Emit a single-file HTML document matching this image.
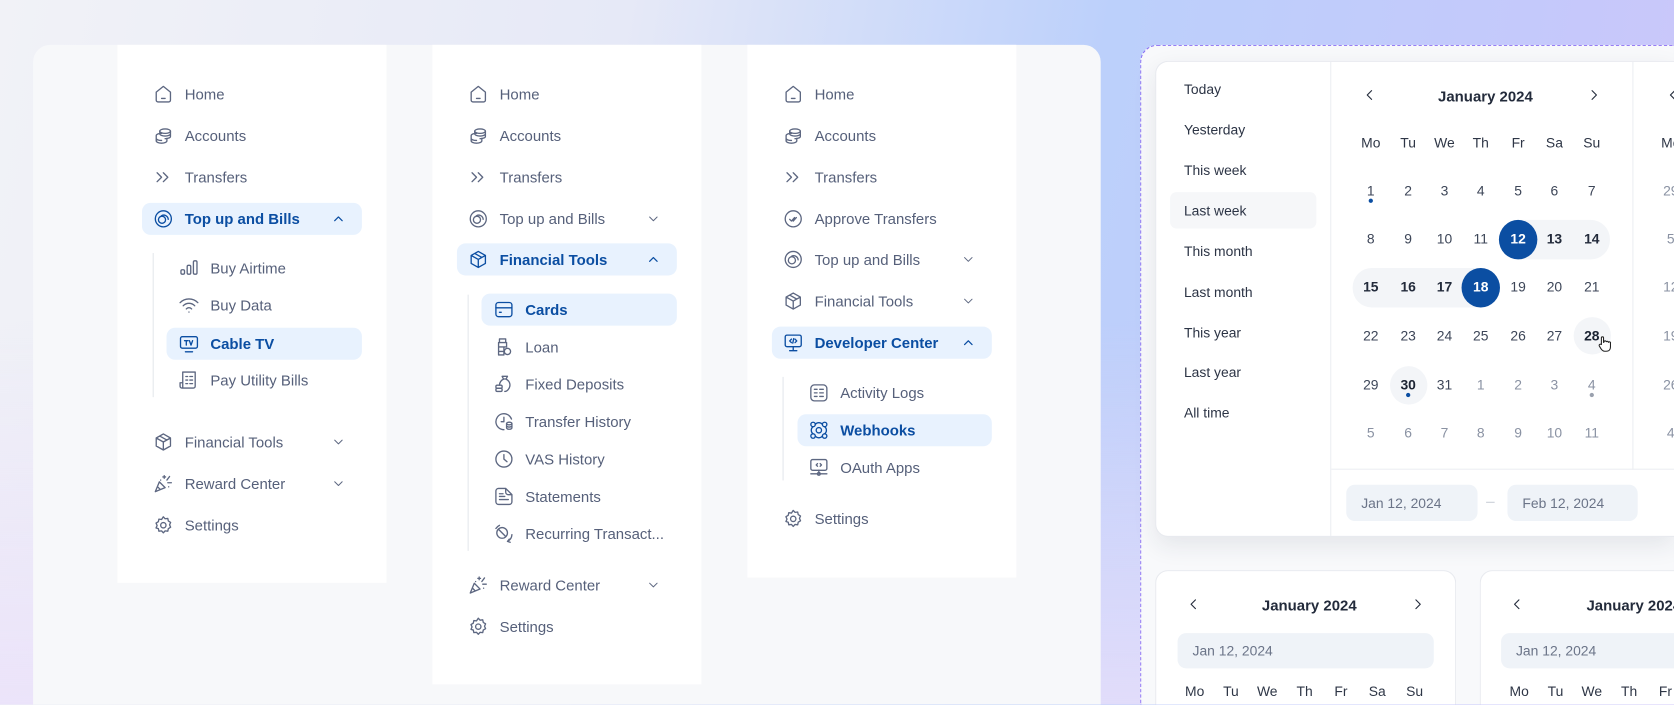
<!DOCTYPE html>
<html><head><meta charset="utf-8"><style>
*{margin:0;padding:0;box-sizing:border-box}
html,body{width:1674px;height:705px;overflow:hidden}
body{position:relative;font-family:"Liberation Sans",sans-serif;background:linear-gradient(100deg,#f1f2f7 0%,#e6e9f7 35%,#bcd0fb 62%,#c4c9fb 85%,#cdc6fa 100%)}
#w{position:absolute;left:0;top:0;width:1568px;height:660px;overflow:hidden;transform:scale(1.0676);transform-origin:0 0}
.bgl{position:absolute;left:0;top:300px;width:1100px;height:360px;background:linear-gradient(180deg,rgba(232,222,250,0) 0%,rgba(234,224,250,.8) 100%)}
.big{position:absolute;left:31px;top:42px;width:1000px;height:618px;background:#f7f8fa;border-radius:16px 16px 0 0}
.panel{position:absolute;background:#fff}
.it{position:absolute;display:flex;align-items:center;height:30px;font-size:14px;color:#56607a;white-space:nowrap}
.it svg{width:20px;height:20px;fill:none;stroke:#5d6781;stroke-width:1.5;stroke-linecap:round;stroke-linejoin:round;margin-right:10px;flex:none}
.act{background:#e8f2fe;border-radius:8px;color:#0b4ea2;font-weight:bold}
.act svg{stroke:#0b4ea2}
.chev{position:absolute;width:14px;height:14px;fill:none;stroke:#5d6781;stroke-width:1.6;stroke-linecap:round;stroke-linejoin:round}
.chev.b{stroke:#0b4ea2;stroke-width:2}
.vl{position:absolute;width:1px;background:#e4e7ec}
.dash{position:absolute;left:1068px;top:42px;width:500px;height:618px;border:1.5px dashed #8a6cf3;border-right:none;border-bottom:none;border-radius:16px 0 0 0;background:#f8f9fb}
.card{position:absolute;background:#fff;border:1px solid #e8eaef;border-radius:12px}
.shadow{box-shadow:0 8px 22px rgba(30,40,70,.09)}
.pre{position:absolute;left:1109px;font-size:13px;color:#2c3445}
.g{position:absolute;font-size:13px;color:#3d4658;width:34px;text-align:center;line-height:16px}
.n{color:#8a92a3}
.wd{position:absolute;font-size:13px;color:#2e3646;width:34px;text-align:center}
.inp{position:absolute;height:34px;background:#eff3f8;border-radius:8px;font-size:13px;color:#6b7488;display:flex;align-items:center;padding-left:14px;white-space:nowrap}
.ttl{position:absolute;font-size:14px;font-weight:bold;color:#232b3b;white-space:nowrap}
.arr{position:absolute;width:14px;height:14px;fill:none;stroke:#232b3b;stroke-width:1.8;stroke-linecap:round;stroke-linejoin:round}
.dot{position:absolute;width:4px;height:4px;border-radius:2px;background:#0b4ea2}
</style></head><body>
<div id="w">
<div class="bgl"></div>
<div class="big"></div>
<div class="panel" style="left:110px;top:42px;width:252px;height:504px"></div>
<div class="panel" style="left:405px;top:42px;width:252px;height:599px"></div>
<div class="panel" style="left:700px;top:42px;width:252px;height:499px"></div>

<!-- Panel 1 -->
<div class="it" style="left:143px;top:73px"><svg viewBox="0 0 24 24"><path d="M4 10l8-6.5 8 6.5v9a2 2 0 0 1-2 2H6a2 2 0 0 1-2-2z M10 17h4"/></svg>Home</div>
<div class="it" style="left:143px;top:112px"><svg viewBox="0 0 24 24"><ellipse cx="14" cy="7" rx="6" ry="2.5"/><path d="M8 7v3c0 1.4 2.7 2.5 6 2.5s6-1.1 6-2.5V7M20 10v3c0 1.4-2.7 2.5-6 2.5M4 12c0-1.4 2.7-2.5 6-2.5M4 12v6c0 1.4 2.7 2.5 6 2.5s6-1.1 6-2.5v-3M4 15c0 1.4 2.7 2.5 6 2.5"/></svg>Accounts</div>
<div class="it" style="left:143px;top:151px"><svg viewBox="0 0 24 24"><path d="M5 7l5 5-5 5M12 7l5 5-5 5"/></svg>Transfers</div>
<div class="it act" style="left:133px;top:190px;width:206px;padding-left:10px"><svg viewBox="0 0 24 24"><circle cx="12" cy="12" r="9"/><circle cx="10.5" cy="13" r="4"/><path d="M10 8.5a5 5 0 0 1 7.5 4"/></svg>Top up and Bills</div>
<svg class="chev b" style="left:310px;top:198px" viewBox="0 0 24 24"><path d="M6 15l6-6 6 6"/></svg>
<div class="vl" style="left:143px;top:237px;height:135px"></div>
<div class="it" style="left:167px;top:236px"><svg viewBox="0 0 24 24"><rect x="3" y="14" width="4" height="5" rx="1.5"/><rect x="10" y="9" width="4" height="10" rx="1.5"/><rect x="17" y="4" width="4" height="15" rx="1.5"/></svg>Buy Airtime</div>
<div class="it" style="left:167px;top:271px"><svg viewBox="0 0 24 24"><path d="M2 9a14 14 0 0 1 20 0M5.5 12.5a9 9 0 0 1 13 0M9 16a4 4 0 0 1 6 0M12 19.5v.1"/></svg>Buy Data</div>
<div class="it act" style="left:156px;top:307px;width:183px;padding-left:11px"><svg viewBox="0 0 24 24"><rect x="2.5" y="4" width="19" height="13" rx="2"/><path d="M8 21h8M7 8.5h4M9 8.5v5M12.5 8.5l1.8 5 1.8-5"/></svg>Cable TV</div>
<div class="it" style="left:167px;top:341px"><svg viewBox="0 0 24 24"><path d="M5 3h14v16a2 2 0 0 1-2 2H5z M5 21h-1a2 2 0 0 1-2-2v-4h3M8.5 8h2M13 8h3M8.5 12h2M13 12h3M8.5 16h2M13 16h3"/></svg>Pay Utility Bills</div>
<div class="it" style="left:143px;top:399px"><svg viewBox="0 0 24 24"><path d="M12 3l8 4.5v9L12 21l-8-4.5v-9z M4 7.5l8 4.5 8-4.5 M12 12v9 M8 5.3l8 4.5"/></svg>Financial Tools</div>
<svg class="chev" style="left:310px;top:407px" viewBox="0 0 24 24"><path d="M6 9l6 6 6-6"/></svg>
<div class="it" style="left:143px;top:438px"><svg viewBox="0 0 24 24"><path d="M3 21l4.5-11 6.5 6.5z M6 16l2 2M13 3v3M11.5 4.5h3M19 4l-3 4M21 11h-4M18 15.5v.1M9 8v.1"/></svg>Reward Center</div>
<svg class="chev" style="left:310px;top:446px" viewBox="0 0 24 24"><path d="M6 9l6 6 6-6"/></svg>
<div class="it" style="left:143px;top:477px"><svg viewBox="0 0 24 24"><path d="M12 2.5l2 2.2 3-.4.6 2.9 2.6 1.6-1.2 2.7 1.2 2.7-2.6 1.6-.6 2.9-3-.4-2 2.2-2-2.2-3 .4-.6-2.9L3.8 15l1.2-2.7L3.8 9.6l2.6-1.6.6-2.9 3 .4z"/><circle cx="12" cy="12" r="3"/></svg>Settings</div>

<!-- Panel 2 -->
<div class="it" style="left:438px;top:73px"><svg viewBox="0 0 24 24"><path d="M4 10l8-6.5 8 6.5v9a2 2 0 0 1-2 2H6a2 2 0 0 1-2-2z M10 17h4"/></svg>Home</div>
<div class="it" style="left:438px;top:112px"><svg viewBox="0 0 24 24"><ellipse cx="14" cy="7" rx="6" ry="2.5"/><path d="M8 7v3c0 1.4 2.7 2.5 6 2.5s6-1.1 6-2.5V7M20 10v3c0 1.4-2.7 2.5-6 2.5M4 12c0-1.4 2.7-2.5 6-2.5M4 12v6c0 1.4 2.7 2.5 6 2.5s6-1.1 6-2.5v-3M4 15c0 1.4 2.7 2.5 6 2.5"/></svg>Accounts</div>
<div class="it" style="left:438px;top:151px"><svg viewBox="0 0 24 24"><path d="M5 7l5 5-5 5M12 7l5 5-5 5"/></svg>Transfers</div>
<div class="it" style="left:438px;top:190px"><svg viewBox="0 0 24 24"><circle cx="12" cy="12" r="9"/><circle cx="10.5" cy="13" r="4"/><path d="M10 8.5a5 5 0 0 1 7.5 4"/></svg>Top up and Bills</div>
<svg class="chev" style="left:605px;top:198px" viewBox="0 0 24 24"><path d="M6 9l6 6 6-6"/></svg>
<div class="it act" style="left:428px;top:228px;width:206px;padding-left:10px"><svg viewBox="0 0 24 24"><path d="M12 3l8 4.5v9L12 21l-8-4.5v-9z M4 7.5l8 4.5 8-4.5 M12 12v9 M8 5.3l8 4.5"/></svg>Financial Tools</div>
<svg class="chev b" style="left:605px;top:236px" viewBox="0 0 24 24"><path d="M6 15l6-6 6 6"/></svg>
<div class="vl" style="left:438px;top:276px;height:240px"></div>
<div class="it act" style="left:451px;top:275px;width:183px;padding-left:11px"><svg viewBox="0 0 24 24"><rect x="3" y="4" width="18" height="16" rx="3"/><path d="M3 10h18M7 15h2"/></svg>Cards</div>
<div class="it" style="left:462px;top:310px"><svg viewBox="0 0 24 24"><path d="M7 3h7v4H7zM6 7h9v5H6zM6 12h6v5H6zM6 17h6v4H6z"/><circle cx="16" cy="17" r="3.5"/></svg>Loan</div>
<div class="it" style="left:462px;top:345px"><svg viewBox="0 0 24 24"><path d="M10 3h6l-1.5 3h-3zM12 6c-3 1-5 4-5 7M14 6c4 1.5 6 6 4 10-1 2-3 4-5 4"/><rect x="3" y="13" width="7" height="3.5" rx="1.5"/><rect x="3" y="16.5" width="7" height="3.5" rx="1.5"/></svg>Fixed Deposits</div>
<div class="it" style="left:462px;top:380px"><svg viewBox="0 0 24 24"><path d="M12 21a9 9 0 1 1 8.5-12M12 7v5h-3"/><ellipse cx="18" cy="14" rx="3" ry="1.5"/><path d="M15 14v5c0 .8 1.3 1.5 3 1.5s3-.7 3-1.5v-5M15 16.5c0 .8 1.3 1.5 3 1.5s3-.7 3-1.5"/></svg>Transfer History</div>
<div class="it" style="left:462px;top:415px"><svg viewBox="0 0 24 24"><circle cx="12" cy="12" r="9"/><path d="M12 7v5l3.5 3"/></svg>VAS History</div>
<div class="it" style="left:462px;top:450px"><svg viewBox="0 0 24 24"><path d="M14 3H6a3 3 0 0 0-3 3v12a3 3 0 0 0 3 3h12a3 3 0 0 0 3-3V10z M14 3v4a3 3 0 0 0 3 3h4M7 12h6M7 15.5h10M7 9h4"/></svg>Statements</div>
<div class="it" style="left:462px;top:485px"><svg viewBox="0 0 24 24"><circle cx="10" cy="11" r="6"/><path d="M6 7l8 8M3 6a10 10 0 0 1 4-3.5M21 13a9 9 0 0 1-5 7.5M18 18l-2 2.5 3 1"/></svg>Recurring Transact...</div>
<div class="it" style="left:438px;top:533px"><svg viewBox="0 0 24 24"><path d="M3 21l4.5-11 6.5 6.5z M6 16l2 2M13 3v3M11.5 4.5h3M19 4l-3 4M21 11h-4M18 15.5v.1M9 8v.1"/></svg>Reward Center</div>
<svg class="chev" style="left:605px;top:541px" viewBox="0 0 24 24"><path d="M6 9l6 6 6-6"/></svg>
<div class="it" style="left:438px;top:572px"><svg viewBox="0 0 24 24"><path d="M12 2.5l2 2.2 3-.4.6 2.9 2.6 1.6-1.2 2.7 1.2 2.7-2.6 1.6-.6 2.9-3-.4-2 2.2-2-2.2-3 .4-.6-2.9L3.8 15l1.2-2.7L3.8 9.6l2.6-1.6.6-2.9 3 .4z"/><circle cx="12" cy="12" r="3"/></svg>Settings</div>

<!-- Panel 3 -->
<div class="it" style="left:733px;top:73px"><svg viewBox="0 0 24 24"><path d="M4 10l8-6.5 8 6.5v9a2 2 0 0 1-2 2H6a2 2 0 0 1-2-2z M10 17h4"/></svg>Home</div>
<div class="it" style="left:733px;top:112px"><svg viewBox="0 0 24 24"><ellipse cx="14" cy="7" rx="6" ry="2.5"/><path d="M8 7v3c0 1.4 2.7 2.5 6 2.5s6-1.1 6-2.5V7M20 10v3c0 1.4-2.7 2.5-6 2.5M4 12c0-1.4 2.7-2.5 6-2.5M4 12v6c0 1.4 2.7 2.5 6 2.5s6-1.1 6-2.5v-3M4 15c0 1.4 2.7 2.5 6 2.5"/></svg>Accounts</div>
<div class="it" style="left:733px;top:151px"><svg viewBox="0 0 24 24"><path d="M5 7l5 5-5 5M12 7l5 5-5 5"/></svg>Transfers</div>
<div class="it" style="left:733px;top:190px"><svg viewBox="0 0 24 24"><circle cx="12" cy="12" r="9"/><path d="M8 12.5l2 2 3.5-4M12 14.5l3.5-4"/></svg>Approve Transfers</div>
<div class="it" style="left:733px;top:228px"><svg viewBox="0 0 24 24"><circle cx="12" cy="12" r="9"/><circle cx="10.5" cy="13" r="4"/><path d="M10 8.5a5 5 0 0 1 7.5 4"/></svg>Top up and Bills</div>
<svg class="chev" style="left:900px;top:236px" viewBox="0 0 24 24"><path d="M6 9l6 6 6-6"/></svg>
<div class="it" style="left:733px;top:267px"><svg viewBox="0 0 24 24"><path d="M12 3l8 4.5v9L12 21l-8-4.5v-9z M4 7.5l8 4.5 8-4.5 M12 12v9 M8 5.3l8 4.5"/></svg>Financial Tools</div>
<svg class="chev" style="left:900px;top:275px" viewBox="0 0 24 24"><path d="M6 9l6 6 6-6"/></svg>
<div class="it act" style="left:723px;top:306px;width:206px;padding-left:10px"><svg viewBox="0 0 24 24"><rect x="3" y="3.5" width="18" height="13" rx="2"/><path d="M8 21h8M12 16.5V21M10 8l-2 2 2 2M14 8l2 2-2 2M12.5 7.5l-1 5"/></svg>Developer Center</div>
<svg class="chev b" style="left:900px;top:314px" viewBox="0 0 24 24"><path d="M6 15l6-6 6 6"/></svg>
<div class="vl" style="left:733px;top:353px;height:97px"></div>
<div class="it" style="left:757px;top:353px"><svg viewBox="0 0 24 24"><rect x="3" y="3" width="18" height="18" rx="4"/><path d="M7 8h3M13 8h4M7 12h3M13 12h4M7 16h3M13 16h4"/></svg>Activity Logs</div>
<div class="it act" style="left:747px;top:388px;width:182px;padding-left:10px"><svg viewBox="0 0 24 24"><circle cx="12" cy="12" r="3"/><circle cx="5.5" cy="5.5" r="2.5"/><circle cx="18.5" cy="5.5" r="2.5"/><circle cx="5.5" cy="18.5" r="2.5"/><circle cx="18.5" cy="18.5" r="2.5"/><path d="M8 5.5a5 5 0 0 1 8 0M8 18.5a5 5 0 0 0 8 0M5.5 8a5 5 0 0 0 0 8M18.5 8a5 5 0 0 1 0 8"/></svg>Webhooks</div>
<div class="it" style="left:757px;top:423px"><svg viewBox="0 0 24 24"><rect x="3" y="3" width="18" height="12" rx="2"/><path d="M12 15v4M3 19h7M14 19h7M10.5 7.5l-1.5 1.5 1.5 1.5M13.5 7.5l1.5 1.5-1.5 1.5"/><circle cx="12" cy="19" r="1.5"/></svg>OAuth Apps</div>
<div class="it" style="left:733px;top:471px"><svg viewBox="0 0 24 24"><path d="M12 2.5l2 2.2 3-.4.6 2.9 2.6 1.6-1.2 2.7 1.2 2.7-2.6 1.6-.6 2.9-3-.4-2 2.2-2-2.2-3 .4-.6-2.9L3.8 15l1.2-2.7L3.8 9.6l2.6-1.6.6-2.9 3 .4z"/><circle cx="12" cy="12" r="3"/></svg>Settings</div>

<!-- Right dashed area -->
<div class="dash"></div>
<div class="card shadow" style="left:1082px;top:57px;width:486px;height:446px;border-right:none;border-radius:12px 0 0 12px"></div>
<div style="position:absolute;left:1246px;top:58px;width:1px;height:444px;background:#eceef2"></div>
<div style="position:absolute;left:1529px;top:58px;width:1px;height:382px;background:#eceef2"></div>
<div style="position:absolute;left:1247px;top:439px;width:321px;height:1px;background:#eceef2"></div>

<div style="position:absolute;left:1096px;top:180px;width:137px;height:34px;background:#f6f7f9;border-radius:6px"></div>
<div class="pre" style="top:76px">Today</div>
<div class="pre" style="top:114px">Yesterday</div>
<div class="pre" style="top:152px">This week</div>
<div class="pre" style="top:190px">Last week</div>
<div class="pre" style="top:228px">This month</div>
<div class="pre" style="top:266px">Last month</div>
<div class="pre" style="top:304px">This year</div>
<div class="pre" style="top:341px">Last year</div>
<div class="pre" style="top:379px">All time</div>

<svg class="arr" style="left:1276px;top:82px" viewBox="0 0 24 24"><path d="M15 5l-7 7 7 7"/></svg>
<div class="ttl" style="left:1347px;top:82px">January 2024</div>
<svg class="arr" style="left:1486px;top:82px" viewBox="0 0 24 24"><path d="M9 5l7 7-7 7"/></svg>
<svg class="arr" style="left:1560px;top:82px" viewBox="0 0 24 24"><path d="M15 5l-7 7 7 7"/></svg>

<div class="wd" style="left:1267px;top:126px">Mo</div><div class="wd" style="left:1302px;top:126px">Tu</div><div class="wd" style="left:1336px;top:126px">We</div><div class="wd" style="left:1370px;top:126px">Th</div><div class="wd" style="left:1405px;top:126px">Fr</div><div class="wd" style="left:1439px;top:126px">Sa</div><div class="wd" style="left:1474px;top:126px">Su</div>
<div class="wd" style="left:1548px;top:126px">Mo</div>

<div style="position:absolute;left:1405px;top:206px;width:103px;height:37px;background:#f3f5f8;border-radius:18px"></div>
<div style="position:absolute;left:1267px;top:251px;width:138px;height:37px;background:#f3f5f8;border-radius:18px"></div>
<div style="position:absolute;left:1404px;top:206px;width:36px;height:37px;background:#0b4ea2;border-radius:50%"></div>
<div style="position:absolute;left:1369px;top:251px;width:36px;height:37px;background:#0b4ea2;border-radius:50%"></div>
<div style="position:absolute;left:1474px;top:297px;width:35px;height:35px;background:#f3f5f8;border-radius:50%"></div>
<div style="position:absolute;left:1302px;top:343px;width:35px;height:36px;background:#f3f5f8;border-radius:50%"></div>

<div class="g" style="left:1267px;top:171px">1</div><div class="g" style="left:1302px;top:171px">2</div><div class="g" style="left:1336px;top:171px">3</div><div class="g" style="left:1370px;top:171px">4</div><div class="g" style="left:1405px;top:171px">5</div><div class="g" style="left:1439px;top:171px">6</div><div class="g" style="left:1474px;top:171px">7</div>
<div class="dot" style="left:1282px;top:186px"></div>
<div class="g" style="left:1267px;top:216px">8</div><div class="g" style="left:1302px;top:216px">9</div><div class="g" style="left:1336px;top:216px">10</div><div class="g" style="left:1370px;top:216px">11</div><div class="g" style="left:1405px;top:216px;color:#fff;font-weight:bold">12</div><div class="g" style="left:1439px;top:216px;color:#232b3b;font-weight:bold">13</div><div class="g" style="left:1474px;top:216px;color:#232b3b;font-weight:bold">14</div>
<div class="g" style="left:1267px;top:261px;color:#232b3b;font-weight:bold">15</div><div class="g" style="left:1302px;top:261px;color:#232b3b;font-weight:bold">16</div><div class="g" style="left:1336px;top:261px;color:#232b3b;font-weight:bold">17</div><div class="g" style="left:1370px;top:261px;color:#fff;font-weight:bold">18</div><div class="g" style="left:1405px;top:261px">19</div><div class="g" style="left:1439px;top:261px">20</div><div class="g" style="left:1474px;top:261px">21</div>
<div class="g" style="left:1267px;top:307px">22</div><div class="g" style="left:1302px;top:307px">23</div><div class="g" style="left:1336px;top:307px">24</div><div class="g" style="left:1370px;top:307px">25</div><div class="g" style="left:1405px;top:307px">26</div><div class="g" style="left:1439px;top:307px">27</div><div class="g" style="left:1474px;top:307px;color:#1c2433;font-weight:bold">28</div>
<svg style="position:absolute;left:1496px;top:314px;width:14px;height:16px" viewBox="0 0 14 16"><path d="M4 9V2.5a1 1 0 0 1 2 0V7l.5-1a1 1 0 0 1 2 .5 1 1 0 0 1 2 .5 1 1 0 0 1 2 .5V11c0 2.5-1.5 4-4 4H7c-1.5 0-2.5-1-3.5-2.5L2 10a1 1 0 0 1 2-1z" fill="#fff" stroke="#222" stroke-width="1"/></svg>
<div class="g" style="left:1267px;top:353px">29</div><div class="g" style="left:1302px;top:353px;color:#1c2433;font-weight:bold">30</div><div class="g" style="left:1336px;top:353px">31</div><div class="g n" style="left:1370px;top:353px">1</div><div class="g n" style="left:1405px;top:353px">2</div><div class="g n" style="left:1439px;top:353px">3</div><div class="g n" style="left:1474px;top:353px">4</div>
<div class="dot" style="left:1317px;top:368px"></div><div class="dot" style="left:1489px;top:368px;background:#9aa1ae"></div>
<div class="g n" style="left:1267px;top:398px">5</div><div class="g n" style="left:1302px;top:398px">6</div><div class="g n" style="left:1336px;top:398px">7</div><div class="g n" style="left:1370px;top:398px">8</div><div class="g n" style="left:1405px;top:398px">9</div><div class="g n" style="left:1439px;top:398px">10</div><div class="g n" style="left:1474px;top:398px">11</div>
<div class="g n" style="left:1548px;top:171px">29</div><div class="g n" style="left:1548px;top:216px">5</div><div class="g n" style="left:1548px;top:261px">12</div><div class="g n" style="left:1548px;top:307px">19</div><div class="g n" style="left:1548px;top:353px">26</div><div class="g n" style="left:1548px;top:398px">4</div>

<div class="inp" style="left:1261px;top:454px;width:123px">Jan 12, 2024</div>
<div style="position:absolute;left:1392px;top:470px;width:8px;height:1px;background:#c9ced7"></div>
<div class="inp" style="left:1412px;top:454px;width:122px">Feb 12, 2024</div>

<div class="card" style="left:1082px;top:534px;width:282px;height:126px;border-bottom:none;border-radius:12px 12px 0 0"></div>
<div class="card" style="left:1386px;top:534px;width:182px;height:126px;border-bottom:none;border-right:none;border-radius:12px 0 0 0"></div>
<svg class="arr" style="left:1111px;top:559px" viewBox="0 0 24 24"><path d="M15 5l-7 7 7 7"/></svg>
<div class="ttl" style="left:1182px;top:559px">January 2024</div>
<svg class="arr" style="left:1321px;top:559px" viewBox="0 0 24 24"><path d="M9 5l7 7-7 7"/></svg>
<div class="inp" style="left:1103px;top:593px;width:240px;height:33px">Jan 12, 2024</div>
<div class="wd" style="left:1102px;top:640px">Mo</div><div class="wd" style="left:1136px;top:640px">Tu</div><div class="wd" style="left:1170px;top:640px">We</div><div class="wd" style="left:1205px;top:640px">Th</div><div class="wd" style="left:1239px;top:640px">Fr</div><div class="wd" style="left:1273px;top:640px">Sa</div><div class="wd" style="left:1308px;top:640px">Su</div>
<svg class="arr" style="left:1414px;top:559px" viewBox="0 0 24 24"><path d="M15 5l-7 7 7 7"/></svg>
<div class="ttl" style="left:1486px;top:559px">January 2024</div>
<div class="inp" style="left:1406px;top:593px;width:162px;height:33px;border-radius:8px 0 0 8px">Jan 12, 2024</div>
<div class="wd" style="left:1406px;top:640px">Mo</div><div class="wd" style="left:1440px;top:640px">Tu</div><div class="wd" style="left:1474px;top:640px">We</div><div class="wd" style="left:1509px;top:640px">Th</div><div class="wd" style="left:1543px;top:640px">Fr</div>
</div>
</body></html>
